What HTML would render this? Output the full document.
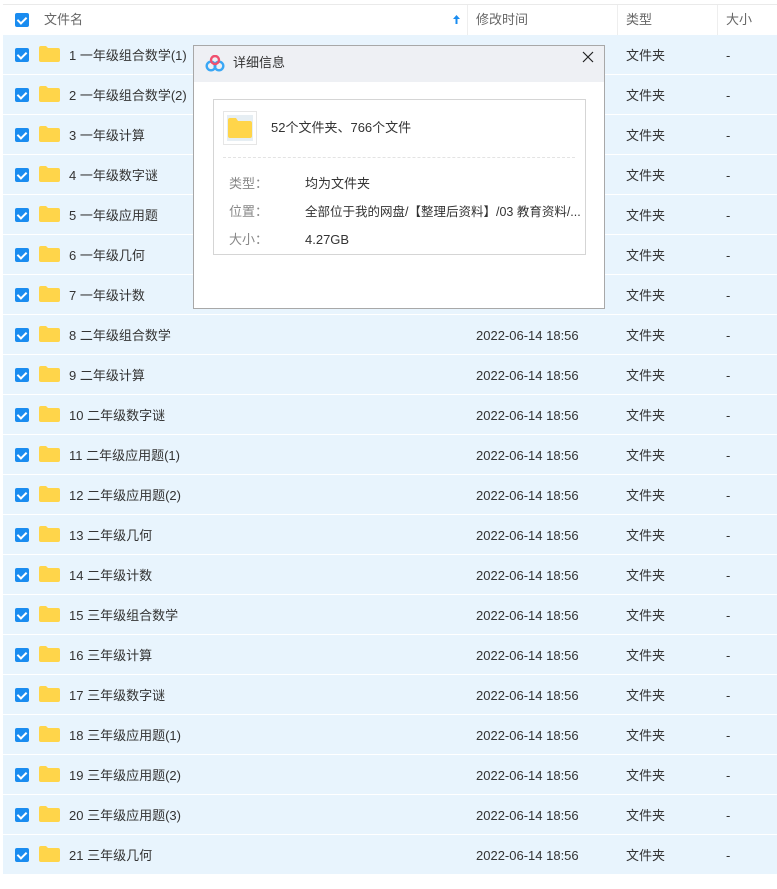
<!DOCTYPE html>
<html><head><meta charset="utf-8"><style>
*{margin:0;padding:0;box-sizing:border-box}
body{width:777px;height:889px;background:#fff;font-family:"Liberation Sans","Noto Sans CJK SC",sans-serif;font-size:13px;color:#333;position:relative;overflow:hidden}
span{line-height:16px;white-space:nowrap}
.hdr{position:absolute;left:3px;top:4px;width:774px;height:31px;border-top:1px solid #eaeaea;color:#666}
.hdr span{position:absolute;top:7px}
.vl{position:absolute;top:0;width:1px;height:30px;background:#eee}
.row{position:absolute;left:3px;width:774px;height:39px;background:#e8f4fd}
.row span{position:absolute;top:13px}
.cb{position:absolute;left:12px;top:13px;width:14px;height:14px;background:#1a8cf0;border-radius:2px}
.cb:after{content:"";position:absolute;left:4px;top:2px;width:4px;height:7px;border:solid #fff;border-width:0 2px 2px 0;transform:rotate(45deg)}
.fd{position:absolute;left:36px;top:11px;width:21px;height:16px}
.dlg{position:absolute;left:193px;top:45px;width:412px;height:264px;background:#fff;border:1px solid #a8a8a8}
.tb{height:36px;background:#eef0f4;position:relative}
.box{position:absolute;left:19px;top:53px;width:373px;height:156px;border:1px solid #d5d5d5}
.lb{position:absolute;left:15px;color:#888}
.vv{position:absolute;left:91px;color:#333}
</style></head><body>
<div class="hdr">
<div class="cb" style="top:8px"></div>
<span style="left:41px">文件名</span>
<svg style="position:absolute;left:450px;top:10px" width="7" height="9" viewBox="0 0 7 9"><path d="M3.5 0L7 4H4.5V9H2.5V4H0Z" fill="#1a8cf0"/></svg>
<div class="vl" style="left:464px"></div>
<span style="left:473px">修改时间</span>
<div class="vl" style="left:614px"></div>
<span style="left:623px">类型</span>
<div class="vl" style="left:714px"></div>
<span style="left:723px">大小</span>
</div>
<div id="rows"></div>
<script>
var names=["1 一年级组合数学(1)","2 一年级组合数学(2)","3 一年级计算","4 一年级数字谜","5 一年级应用题","6 一年级几何","7 一年级计数","8 二年级组合数学","9 二年级计算","10 二年级数字谜","11 二年级应用题(1)","12 二年级应用题(2)","13 二年级几何","14 二年级计数","15 三年级组合数学","16 三年级计算","17 三年级数字谜","18 三年级应用题(1)","19 三年级应用题(2)","20 三年级应用题(3)","21 三年级几何"];
var h="";
names.forEach(function(n,i){
h+='<div class="row" style="top:'+(35+40*i)+'px"><div class="cb"></div><svg class="fd" viewBox="0 0 21 16"><path d="M0 2Q0 0 2 0H7L9 2H19Q21 2 21 4V14Q21 16 19 16H2Q0 16 0 14Z" fill="#ffd54a"/></svg><span style="left:66px">'+n+'</span>'+(i>=7?'<span style="left:473px">2022-06-14 18:56</span>':'')+'<span style="left:623px">文件夹</span><span style="left:723px">-</span></div>';
});
document.getElementById("rows").innerHTML=h;
</script>
<div class="dlg">
<div class="tb">
<svg style="position:absolute;left:11px;top:9px" width="20" height="17" viewBox="0 0 20 17"><circle cx="6" cy="11" r="4.3" fill="none" stroke="#3aa7f5" stroke-width="2.4"/><circle cx="14" cy="11" r="4.3" fill="none" stroke="#3aa7f5" stroke-width="2.4"/><circle cx="10" cy="5" r="4" fill="none" stroke="#f0506e" stroke-width="2.4"/></svg>
<span style="position:absolute;left:39px;top:9px;font-size:13px">详细信息</span>
<svg style="position:absolute;left:388px;top:5px" width="12" height="12" viewBox="0 0 12 12"><path d="M1 1L11 11M11 1L1 11" stroke="#222" stroke-width="1.2"/></svg>
</div>
<div class="box">
<div style="position:absolute;left:9px;top:11px;width:34px;height:34px;border:1px solid #e6e6e6;background:#fff"><div style="position:absolute;left:3px;top:3px;width:26px;height:26px;background:#e6eef3"></div><svg style="position:absolute;left:4px;top:6px" width="24" height="20" viewBox="0 0 24 20"><path d="M0 2Q0 0 2 0H8L10 3H22Q24 3 24 5V18Q24 20 22 20H2Q0 20 0 18Z" fill="#ffd54a"/></svg></div>
<span style="position:absolute;left:57px;top:20px">52个文件夹、766个文件</span>
<div style="position:absolute;left:9px;top:57px;width:352px;border-top:1px dashed #e3e3e3"></div>
<span class="lb" style="top:76px">类型：</span><span class="vv" style="top:76px">均为文件夹</span>
<span class="lb" style="top:104px">位置：</span><span class="vv" style="top:104px;font-size:12.5px">全部位于我的网盘/【整理后资料】/03 教育资料/...</span>
<span class="lb" style="top:132px">大小：</span><span class="vv" style="top:132px">4.27GB</span>
</div>
</div>
</body></html>
